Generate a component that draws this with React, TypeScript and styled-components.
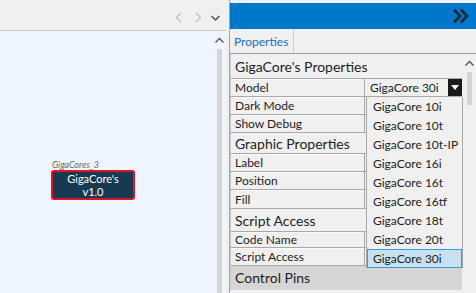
import React from "react";
import styled, { createGlobalStyle } from "styled-components";

const GlobalStyle = createGlobalStyle`
  html, body {
    margin: 0;
    padding: 0;
    background: #f0f0f0;
    font-family: Lato, "Open Sans", sans-serif;
  }
  * { box-sizing: border-box; }
`;

const Screen = styled.div`
  display: flex;
  width: 476px;
  height: 293px;
  overflow: hidden;
  background: #f0f0f0;
`;

/* ---------- left: diagram canvas ---------- */

const LeftPane = styled.div`
  width: 226px;
  display: flex;
  flex-direction: column;
`;

const NavBar = styled.div`
  height: 30px;
  display: flex;
  align-items: center;
  justify-content: flex-end;
  gap: 5px;
  padding: 4px 4px 0 0;
`;

const NavButton = styled.span<{ $dim?: boolean }>`
  width: 13px;
  height: 13px;
  display: flex;
  align-items: center;
  justify-content: center;
  color: ${(p) => (p.$dim ? "#bdbdbd" : "#505050")};
`;

const CanvasRow = styled.div`
  flex: 1;
  display: flex;
  background: #eef5fe;
  border-top: 1px solid #c9c9c9;
`;

const Canvas = styled.div`
  flex: 1;
  position: relative;
`;

const VScroll = styled.div<{ $bg: string }>`
  width: 14px;
  display: flex;
  flex-direction: column;
  align-items: center;
  background: ${(p) => p.$bg};
`;

const ScrollArrow = styled.span`
  height: 18px;
  display: flex;
  align-items: center;
  justify-content: center;
  color: #555;
`;

const Thumb = styled.div<{ $h?: number }>`
  width: 5px;
  background: #d4d4d4;
  ${(p) => (p.$h ? `height: ${p.$h}px;` : "flex: 1;")}
`;

const Node = styled.div`
  position: absolute;
  left: 51px;
  top: 128px;
  display: flex;
  flex-direction: column;
`;

const NodeName = styled.span`
  font-size: 9px;
  font-style: italic;
  color: #6a6a6a;
  line-height: 11px;
  padding-left: 1px;
`;

const NodeBox = styled.div`
  width: 84px;
  height: 30px;
  background: #163a52;
  border: 2px solid #e0141e;
  border-radius: 3px;
  color: #fff;
  font-size: 11px;
  line-height: 13px;
  text-align: center;
  display: flex;
  flex-direction: column;
  justify-content: center;
`;

/* ---------- right: properties panel ---------- */

const RightPane = styled.div`
  margin-left: 3px;
  flex: 1;
  display: flex;
  flex-direction: column;
  padding-top: 3px;
  border-left: 1px solid #a5a5a5;
`;

const TitleBar = styled.div`
  height: 26px;
  background: #0078c9;
  display: flex;
  align-items: center;
  justify-content: flex-end;
  padding-right: 6px;
`;

const TabStrip = styled.div`
  height: 25px;
  display: flex;
  border-bottom: 1px solid #a0a0a0;
`;

const Tab = styled.div`
  padding: 0 5px 0 4px;
  font-size: 12px;
  color: #1a6fc4;
  display: flex;
  align-items: center;
  border-right: 1px solid #d0d0d0;
`;

const GridWrap = styled.div`
  flex: 1;
  display: flex;
  position: relative;
`;

const Grid = styled.div`
  flex: 1;
  display: flex;
  flex-direction: column;
`;

const Section = styled.div<{ $h: number; $dark?: boolean }>`
  height: ${(p) => p.$h}px;
  font-size: 14px;
  color: #1e1e1e;
  padding-left: 4px;
  display: flex;
  align-items: center;
  background: ${(p) => (p.$dark ? "#d6d6d6" : "#f0f0f0")};
  border-bottom: 1px solid ${(p) => (p.$dark ? "#d6d6d6" : "#a9a9a9")};
  border-left: 1px solid #c8c8c8;
`;

const Row = styled.div<{ $h: number }>`
  height: ${(p) => p.$h}px;
  display: flex;
  border-bottom: 1px solid #a9a9a9;
`;

const Label = styled.div`
  width: 135px;
  font-size: 12px;
  color: #1e1e1e;
  padding-left: 4px;
  display: flex;
  align-items: center;
  border-left: 1px solid #c8c8c8;
  border-right: 1px solid #a9a9a9;
  box-shadow: inset 0 1px 0 #fafafa;
`;

const Value = styled.div`
  flex: 1;
  display: flex;
  align-items: center;
  font-size: 12px;
  color: #1e1e1e;
`;

const ValueText = styled.span`
  flex: 1;
  padding-left: 5px;
`;

const DropButton = styled.span`
  width: 14px;
  height: 17px;
  background: #1a1a1a;
  display: flex;
  align-items: center;
  justify-content: center;
`;

const DropList = styled.div`
  position: absolute;
  left: 136px;
  top: 43px;
  width: 97px;
  background: #f0f0f0;
  border-left: 1px solid #a9a9a9;
  border-right: 1px solid #a9a9a9;
  display: flex;
  flex-direction: column;
`;

const Option = styled.div<{ $sel?: boolean }>`
  height: 19px;
  font-size: 12px;
  color: #1e1e1e;
  padding-left: 5px;
  display: flex;
  align-items: center;
  background: ${(p) => (p.$sel ? "#c7e1f1" : "transparent")};
  border: 1px solid ${(p) => (p.$sel ? "#3c98d6" : "transparent")};
`;

const Chevron = ({ d, w = 2 }: { d: string; w?: number }) => (
  <svg width="13" height="13" viewBox="0 0 13 13" fill="none">
    <path d={d} stroke="currentColor" strokeWidth={w} />
  </svg>
);

const models = [
  "GigaCore 10i",
  "GigaCore 10t",
  "GigaCore 10t-IP",
  "GigaCore 16i",
  "GigaCore 16t",
  "GigaCore 16tf",
  "GigaCore 18t",
  "GigaCore 20t",
  "GigaCore 30i",
];

export default function App() {
  return (
    <>
      <GlobalStyle />
      <Screen>
        <LeftPane>
          <NavBar>
            <NavButton $dim>
              <Chevron d="M8 2 L3.5 6.5 L8 11" w={1.3} />
            </NavButton>
            <NavButton $dim>
              <Chevron d="M5 2 L9.5 6.5 L5 11" w={1.3} />
            </NavButton>
            <NavButton>
              <Chevron d="M2.5 5 L6.5 9 L10.5 5" w={1.5} />
            </NavButton>
          </NavBar>
          <CanvasRow>
            <Canvas>
              <Node>
                <NodeName>GigaCores_3</NodeName>
                <NodeBox>
                  <span>GigaCore's</span>
                  <span>v1.0</span>
                </NodeBox>
              </Node>
            </Canvas>
            <VScroll $bg="transparent">
              <ScrollArrow>
                <Chevron d="M2.5 8.5 L6.5 4.5 L10.5 8.5" w={1.4} />
              </ScrollArrow>
              <Thumb />
            </VScroll>
          </CanvasRow>
        </LeftPane>

        <RightPane>
          <TitleBar>
            <svg width="18" height="16" viewBox="0 0 18 16" fill="none">
              <path d="M2 1.5 L8 8 L2 14.5 M9 1.5 L15 8 L9 14.5" stroke="#14283a" strokeWidth="2.6" />
            </svg>
          </TitleBar>
          <TabStrip>
            <Tab>Properties</Tab>
          </TabStrip>
          <GridWrap>
            <Grid>
              <Section $h={25}>GigaCore's Properties</Section>
              <Row $h={18}>
                <Label>Model</Label>
                <Value>
                  <ValueText>GigaCore 30i</ValueText>
                  <DropButton>
                    <svg width="8" height="5" viewBox="0 0 8 5">
                      <path d="M0 0 H8 L4 5 Z" fill="#fff" />
                    </svg>
                  </DropButton>
                </Value>
              </Row>
              <Row $h={18}>
                <Label>Dark Mode</Label>
                <Value />
              </Row>
              <Row $h={18}>
                <Label>Show Debug</Label>
                <Value />
              </Row>
              <Section $h={21}>Graphic Properties</Section>
              <Row $h={18}>
                <Label>Label</Label>
                <Value />
              </Row>
              <Row $h={18}>
                <Label>Position</Label>
                <Value />
              </Row>
              <Row $h={19}>
                <Label>Fill</Label>
                <Value />
              </Row>
              <Section $h={23}>Script Access</Section>
              <Row $h={16}>
                <Label>Code Name</Label>
                <Value />
              </Row>
              <Row $h={18}>
                <Label>Script Access</Label>
                <Value />
              </Row>
              <Section $h={24} $dark>
                Control Pins
              </Section>
            </Grid>
            <VScroll $bg="#f0f0f0">
              <ScrollArrow>
                <Chevron d="M2.5 8.5 L6.5 4.5 L10.5 8.5" w={1.4} />
              </ScrollArrow>
              <Thumb $h={33} />
            </VScroll>
            <DropList>
              {models.map((m) => (
                <Option key={m} $sel={m === "GigaCore 30i"}>
                  {m}
                </Option>
              ))}
            </DropList>
          </GridWrap>
        </RightPane>
      </Screen>
    </>
  );
}
